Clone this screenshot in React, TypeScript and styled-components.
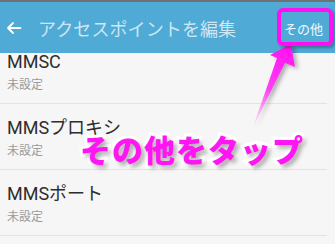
import React from "react";
import styled, { createGlobalStyle } from "styled-components";

const Global = createGlobalStyle`
  html, body { margin: 0; padding: 0; background: #f6f6f6; }
  body { font-family: "Roboto", "Noto Sans CJK JP", sans-serif; }
`;

const Screen = styled.div`
  position: relative;
  width: 335px;
  height: 244px;
  overflow: hidden;
  background: #f6f6f6;
`;

const StatusEdge = styled.div`
  height: 2px;
  background: #6f7173;
  position: relative;
  z-index: 2;
`;

const AppBar = styled.header`
  position: relative;
  z-index: 2;
  height: 51px;
  background: #4fabd6;
  display: flex;
  align-items: center;
  padding: 0 0 0 6px;
`;

const BackButton = styled.span`
  display: flex;
  align-items: center;
  width: 32px;
  color: #fff;
`;

const Title = styled.h1`
  margin: 0;
  flex: 1;
  font-family: "Noto Sans CJK JP", sans-serif;
  font-weight: 400;
  font-size: 18px;
  letter-spacing: 0.1px;
  color: rgba(255, 255, 255, 0.72);
`;

const Action = styled.span`
  font-family: "Noto Sans CJK JP", sans-serif;
  font-size: 13px;
  color: #f2f8fb;
  margin-right: 12px;
  margin-top: 1px;
`;

const List = styled.div`
  position: relative;
  z-index: 1;
  margin-top: -15px;
`;

const Row = styled.div`
  border-bottom: 1px solid #e3e3e3;
  margin-right: 8px;
  padding: 13px 0 0 7px;
  box-sizing: border-box;
  height: 66px;
`;

const RowTitle = styled.div`
  font-family: "Roboto", "Noto Sans CJK JP", sans-serif;
  font-size: 18px;
  line-height: 22px;
  color: #2d2d2d;
`;

const RowSub = styled.div`
  margin-top: 1px;
  font-family: "Noto Sans CJK JP", sans-serif;
  font-size: 12px;
  line-height: 20px;
  color: #9a9a9a;
`;

const Callout = styled.div`
  position: absolute;
  z-index: 5;
  left: 277px;
  top: 8px;
  width: 56px;
  height: 38px;
  box-sizing: border-box;
  border: 4px solid #ff10f0;
  border-radius: 6px;
  box-shadow: 2px 2px 3px rgba(0, 0, 0, 0.3);
`;

const Pointer = styled.svg`
  position: absolute;
  z-index: 4;
  left: 0;
  top: 0;
  pointer-events: none;
`;

const Caption = styled.div`
  position: absolute;
  z-index: 6;
  left: 80px;
  top: 131px;
  font-family: "Noto Sans CJK JP", sans-serif;
  font-weight: 900;
  font-size: 31px;
  line-height: 36px;
  letter-spacing: 1px;
  color: #ff14f4;
  -webkit-text-stroke: 6px #ffffff;
  paint-order: stroke fill;
  text-shadow: 3px 3px 4px rgba(0, 0, 0, 0.35);
  white-space: nowrap;
`;

const rows = [
  { title: "MMSC", sub: "未設定" },
  { title: "MMSプロキシ", sub: "未設定" },
  { title: "MMSポート", sub: "未設定" },
];

export default function App() {
  return (
    <Screen>
      <Global />
      <StatusEdge />
      <AppBar>
        <BackButton>
          <svg width="16" height="16" viewBox="0 0 16 16" fill="none" stroke="#fff" strokeWidth="1.8" strokeLinecap="round" strokeLinejoin="round">
            <path d="M14.5 8H2M7 3L2 8l5 5" />
          </svg>
        </BackButton>
        <Title>アクセスポイントを編集</Title>
        <Action>その他</Action>
      </AppBar>
      <List>
        {rows.map((r) => (
          <Row key={r.title}>
            <RowTitle>{r.title}</RowTitle>
            <RowSub>{r.sub}</RowSub>
          </Row>
        ))}
      </List>
      <Pointer width="335" height="244" viewBox="0 0 335 244">
        <defs>
          <linearGradient id="pg" x1="290" y1="45" x2="253" y2="127" gradientUnits="userSpaceOnUse">
            <stop offset="0" stopColor="#ff10f0" />
            <stop offset="0.55" stopColor="#ff40f4" />
            <stop offset="1" stopColor="#ff80f8" stopOpacity="0.15" />
          </linearGradient>
          <filter id="ps" x="-30%" y="-30%" width="160%" height="160%">
            <feDropShadow dx="3" dy="2" stdDeviation="2" floodColor="#000" floodOpacity="0.3" />
          </filter>
        </defs>
        <polygon
          points="291,44 270,55 277,58 253,127 285,63 295,67"
          fill="url(#pg)"
          filter="url(#ps)"
        />
      </Pointer>
      <Callout />
      <Caption>その他をタップ</Caption>
    </Screen>
  );
}
